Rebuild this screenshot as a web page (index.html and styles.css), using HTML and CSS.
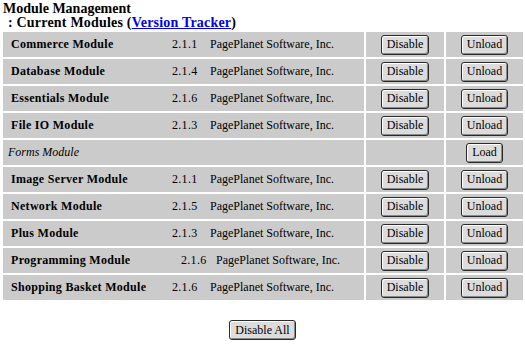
FILE: index.html
```html
<!DOCTYPE html>
<html>
<head>
<meta charset="utf-8">
<title>Module Management</title>
<link rel="stylesheet" href="styles.css">
</head>
<body>
<div class="page">
  <h1 class="title">Module Management</h1>
  <h2 class="subtitle">: Current Modules (<a href="#">Version Tracker</a>)</h2>
  <div class="grid">
    <div class="cell info"><span class="name">Commerce Module</span><span class="ver">2.1.1</span><span class="vendor">PagePlanet Software, Inc.</span></div>
    <div class="cell act"><button class="btn">Disable</button></div>
    <div class="cell act"><button class="btn">Unload</button></div>

    <div class="cell info"><span class="name">Database Module</span><span class="ver">2.1.4</span><span class="vendor">PagePlanet Software, Inc.</span></div>
    <div class="cell act"><button class="btn">Disable</button></div>
    <div class="cell act"><button class="btn">Unload</button></div>

    <div class="cell info"><span class="name">Essentials Module</span><span class="ver">2.1.6</span><span class="vendor">PagePlanet Software, Inc.</span></div>
    <div class="cell act"><button class="btn">Disable</button></div>
    <div class="cell act"><button class="btn">Unload</button></div>

    <div class="cell info"><span class="name">File IO Module</span><span class="ver">2.1.3</span><span class="vendor">PagePlanet Software, Inc.</span></div>
    <div class="cell act"><button class="btn">Disable</button></div>
    <div class="cell act"><button class="btn">Unload</button></div>

    <div class="cell info"><span class="inactive">Forms Module</span></div>
    <div class="cell act"></div>
    <div class="cell act"><button class="btn">Load</button></div>

    <div class="cell info"><span class="name">Image Server Module</span><span class="ver">2.1.1</span><span class="vendor">PagePlanet Software, Inc.</span></div>
    <div class="cell act"><button class="btn">Disable</button></div>
    <div class="cell act"><button class="btn">Unload</button></div>

    <div class="cell info"><span class="name">Network Module</span><span class="ver">2.1.5</span><span class="vendor">PagePlanet Software, Inc.</span></div>
    <div class="cell act"><button class="btn">Disable</button></div>
    <div class="cell act"><button class="btn">Unload</button></div>

    <div class="cell info"><span class="name">Plus Module</span><span class="ver">2.1.3</span><span class="vendor">PagePlanet Software, Inc.</span></div>
    <div class="cell act"><button class="btn">Disable</button></div>
    <div class="cell act"><button class="btn">Unload</button></div>

    <div class="cell info wide"><span class="name">Programming Module</span><span class="ver">2.1.6</span><span class="vendor">PagePlanet Software, Inc.</span></div>
    <div class="cell act"><button class="btn">Disable</button></div>
    <div class="cell act"><button class="btn">Unload</button></div>

    <div class="cell info"><span class="name">Shopping Basket Module</span><span class="ver">2.1.6</span><span class="vendor">PagePlanet Software, Inc.</span></div>
    <div class="cell act"><button class="btn">Disable</button></div>
    <div class="cell act"><button class="btn">Unload</button></div>
  </div>
  <div class="footer"><button class="btn">Disable All</button></div>
</div>
</body>
</html>
```
FILE: styles.css
```css
html, body {
  margin: 0;
  padding: 0;
  background: #ffffff;
}
body {
  font-family: "Liberation Serif", "Times New Roman", serif;
  color: #000000;
}
.page {
  padding: 2px 0 0 3px;
}
.title {
  margin: 0;
  font-size: 14px;
  line-height: 14px;
  font-weight: bold;
}
.subtitle {
  margin: 0 0 0 5px;
  font-size: 14px;
  line-height: 14px;
  font-weight: bold;
  letter-spacing: 0.2px;
}
.subtitle a {
  color: #0000ee;
  text-decoration: underline;
}
.grid {
  margin-top: 2px;
  width: 520px;
  display: grid;
  grid-template-columns: 361px 78px 77px;
  grid-auto-rows: 25px;
  gap: 2px;
}
.cell {
  background: #cbcbcb;
  display: flex;
  align-items: center;
}
.info {
  padding-left: 8px;
  font-size: 12px;
}
.name {
  font-weight: bold;
  font-size: 12px;
  width: 161px;
  letter-spacing: 0.3px;
}
.wide .name {
  width: 170px;
}
.ver {
  width: 38px;
  letter-spacing: 0.3px;
}
.wide .ver {
  width: 35px;
}
.vendor {
  letter-spacing: 0;
}
.inactive {
  font-style: italic;
  margin-left: -3px;
  letter-spacing: 0;
}
.act {
  justify-content: center;
}
.btn {
  font-family: "Liberation Serif", "Times New Roman", serif;
  font-size: 12px;
  height: 20px;
  padding: 0 5px;
  background: #dcdcdc;
  color: #000;
  border: 1px solid #2a2a2a;
  border-radius: 3px;
  box-shadow: inset 1px 1px 0 #ffffff, inset -1px -1px 0 #8a8a8a;
}
.footer {
  display: flex;
  justify-content: center;
  margin-top: 20px;
  padding-right: 3px;
}
```
